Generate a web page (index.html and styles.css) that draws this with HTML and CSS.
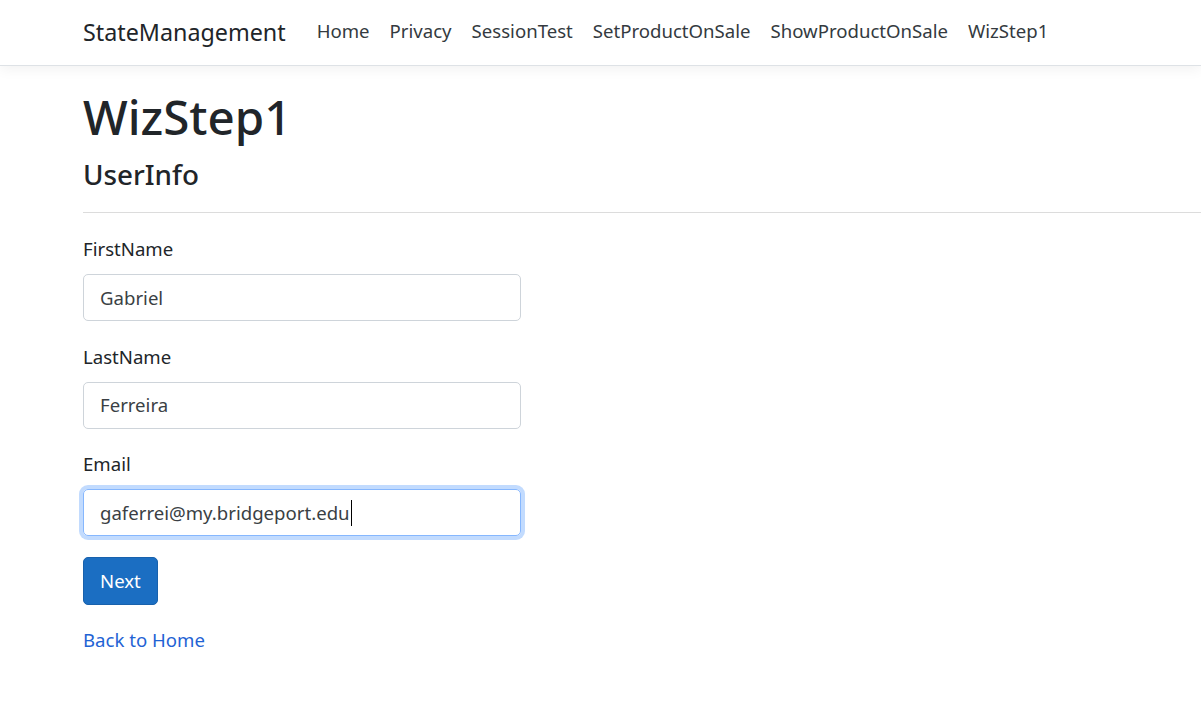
FILE: index.html
```html
<!DOCTYPE html>
<html lang="en">
<head>
<meta charset="utf-8">
<title>WizStep1 - StateManagement</title>
<link rel="stylesheet" href="styles.css">
</head>
<body>
<header class="navbar">
  <div class="container nav-inner">
    <a class="brand" href="#">StateManagement</a>
    <ul class="nav">
      <li><a class="nav-link" href="#">Home</a></li>
      <li><a class="nav-link" href="#">Privacy</a></li>
      <li><a class="nav-link" href="#">SessionTest</a></li>
      <li><a class="nav-link" href="#">SetProductOnSale</a></li>
      <li><a class="nav-link" href="#">ShowProductOnSale</a></li>
      <li><a class="nav-link" href="#">WizStep1</a></li>
    </ul>
  </div>
</header>
<main class="container main">
  <h1 class="title">WizStep1</h1>
  <h4 class="subtitle">UserInfo</h4>
  <hr class="divider">
  <form class="form">
    <div class="form-group">
      <label class="label">FirstName</label>
      <div class="form-control">Gabriel</div>
    </div>
    <div class="form-group">
      <label class="label">LastName</label>
      <div class="form-control">Ferreira</div>
    </div>
    <div class="form-group">
      <label class="label">Email</label>
      <div class="form-control focused">gaferrei@my.bridgeport.edu<span class="caret"></span></div>
    </div>
    <div class="form-group form-actions">
      <button type="button" class="btn">Next</button>
    </div>
  </form>
  <div class="back"><a class="link" href="#">Back to Home</a></div>
</main>
</body>
</html>
```
FILE: styles.css
```css
* { box-sizing: border-box; }
html, body { margin: 0; padding: 0; }
body {
  font-family: "Noto Sans", "Open Sans", sans-serif;
  font-size: 18.6px;
  line-height: 30px;
  color: #212529;
  background: #fff;
  width: 1201px;
  overflow: hidden;
}
.container { padding-left: 83px; }
.navbar {
  height: 66px;
  border-bottom: 1px solid #dee2e6;
  box-shadow: 0 4px 12px rgba(0,0,0,.05);
  background: #fff;
}
.nav-inner {
  display: flex;
  align-items: center;
  height: 65px;
}
.brand {
  font-size: 23.3px;
  color: #212529;
  text-decoration: none;
  margin-right: 21px;
  padding-bottom: 1px;
}
.nav {
  display: flex;
  list-style: none;
  margin: 0;
  padding: 0;
}
.nav-link {
  display: block;
  padding: 0 10px 4px;
  color: #343a40;
  text-decoration: none;
}
.main { padding-top: 22px; }
.title {
  font-size: 47.5px;
  font-weight: 500;
  line-height: 1.2;
  margin: 0 0 13px;
}
.subtitle {
  font-size: 27.8px;
  font-weight: 500;
  line-height: 1.2;
  margin: 0;
}
.divider {
  border: 0;
  border-top: 1px solid #dcdcdc;
  margin: 21px 0 21px;
}
.form-group { margin-bottom: 20.5px; }
.form-actions { margin-top: 1px; }
.label {
  display: block;
  margin-bottom: 10px;
}
.form-control {
  width: 438px;
  height: 47px;
  padding: 7px 16px;
  border: 1px solid #ced4da;
  border-radius: 5px;
  color: #3a3f44;
  display: flex;
  align-items: center;
}
.form-control.focused {
  border-color: #86b7fe;
  box-shadow: 0 0 0 4px rgba(13,110,253,.25);
}
.caret {
  display: inline-block;
  width: 1px;
  height: 26px;
  background: #000;
  margin-left: 1px;
}
.btn {
  font: inherit;
  color: #fff;
  background: #1b6ec2;
  border: 1px solid #1861ac;
  border-radius: 5px;
  padding: 7px 16px;
  height: 48px;
  cursor: pointer;
}
.back { margin-top: 2px; }
.link { color: #1f63d4; text-decoration: none; }
```
